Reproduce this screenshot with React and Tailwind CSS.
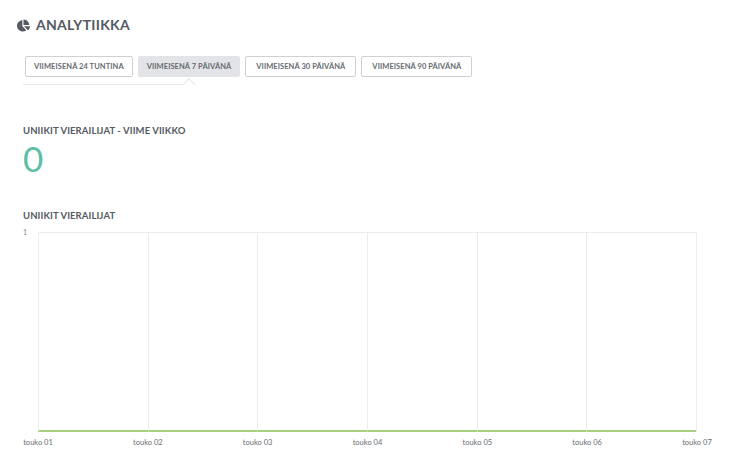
import { FaChartPie } from 'react-icons/fa';

const RANGES = [
  { label: 'Viimeisenä 24 tuntina', active: false },
  { label: 'Viimeisenä 7 päivänä', active: true },
  { label: 'Viimeisenä 30 päivänä', active: false },
  { label: 'Viimeisenä 90 päivänä', active: false },
];

const DAYS = ['touko 01', 'touko 02', 'touko 03', 'touko 04', 'touko 05', 'touko 06', 'touko 07'];

export default function App() {
  return (
    <div className="h-[455px] w-[734px] bg-white font-['Lato',sans-serif] text-[#555a63]">
      <div className="flex items-center gap-[6px] pl-[17px] pt-[18px]">
        <FaChartPie className="h-[13px] w-[13px] text-[#555a63]" />
        <h1 className="text-[14px] font-bold leading-[14px] tracking-[0.02em]">ANALYTIIKKA</h1>
      </div>

      <div className="mt-[24px] pl-[25px]">
        <div className="flex gap-[5px]">
          {RANGES.map((range) => (
            <button
              key={range.label}
              type="button"
              className={`h-[21px] rounded-[2px] border px-[8px] text-[7.5px] font-bold uppercase tracking-[0.01em] text-[#666a70] ${
                range.active ? 'border-[#e3e4e7] bg-[#e3e4e7]' : 'border-[#cfd0d2] bg-white'
              } ${range.label.includes('30') || range.label.includes('90') ? 'px-[10px]' : ''}`}
            >
              {range.label}
            </button>
          ))}
        </div>
        <div className="relative mt-[6px] h-[2px] w-[174px]">
          <div className="absolute bottom-0 left-[-2px] h-px w-[160px] bg-[#e6e7e9]" />
          <div className="absolute bottom-0 left-[157px] h-[7px] w-[14px] overflow-hidden">
            <div className="absolute left-[2px] top-[2px] h-[10px] w-[10px] rotate-45 border-l border-t border-[#e6e7e9] bg-white" />
          </div>
        </div>
      </div>

      <div className="mt-[41px] pl-[23px]">
        <h2 className="text-[9.5px] font-bold leading-[10px] tracking-[0.01em]">UNIIKIT VIERAILIJAT - VIIME VIIKKO</h2>
        <p className="mt-[5px] text-[35px] font-normal leading-[35px] text-[#5cbfa5]">0</p>
      </div>

      <div className="mt-[35px] pl-[23px]">
        <h2 className="text-[9.5px] font-bold leading-[10px] tracking-[0.01em]">UNIIKIT VIERAILIJAT</h2>
        <div className="mt-[8px] flex">
          <div className="w-[15px] text-[7px] leading-[7px] text-[#888b90]">1</div>
          <div className="mt-[3px] grid h-[200px] w-[659px] grid-cols-6 border-r border-t border-[#ececec]">
            {DAYS.slice(0, 6).map((day) => (
              <div key={day} className="border-b-2 border-l border-b-[#a6d07d] border-l-[#ececec]" />
            ))}
          </div>
        </div>
        <div className="mt-[5px] flex w-[689px] justify-between">
          {DAYS.map((day) => (
            <span key={day} className="w-[30px] whitespace-nowrap text-center text-[7.5px] text-[#6b6e73]">
              {day}
            </span>
          ))}
        </div>
      </div>
    </div>
  );
}
